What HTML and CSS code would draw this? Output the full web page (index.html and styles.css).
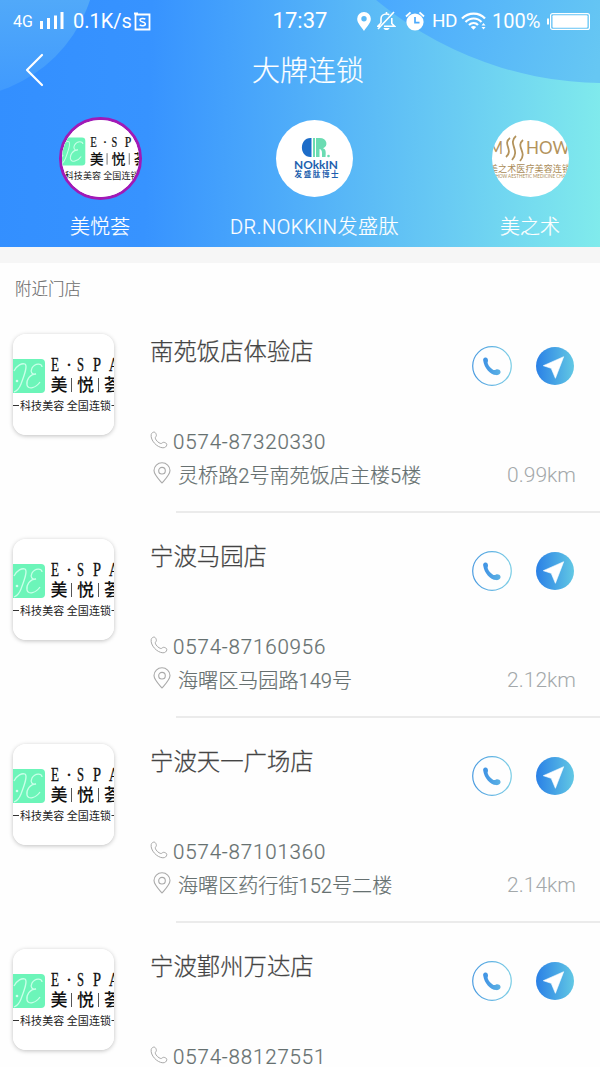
FILE: index.html
```html
<!DOCTYPE html>
<html lang="zh-CN">
<head>
    <meta charset="UTF-8">
    <meta name="viewport" content="width=device-width, initial-scale=1.0">
    <title>大牌连锁</title>
    <link rel="stylesheet" href="styles.css">
</head>
<body>
    <!-- 公用图形 -->
    <svg class="defs" width="0" height="0">
        <defs>
            <linearGradient id="blueGrad" x1="0" y1="0" x2="1" y2="0">
                <stop offset="0" stop-color="#2a80e6"/>
                <stop offset="1" stop-color="#62c8e4"/>
            </linearGradient>
            <linearGradient id="callGrad" x1="0" y1="0" x2="1" y2="0">
                <stop offset="0" stop-color="#3f92e4"/>
                <stop offset="1" stop-color="#5cb2e4"/>
            </linearGradient>
            <linearGradient id="ringGrad" x1="0" y1="0" x2="1" y2="0">
                <stop offset="0" stop-color="#4a9be0"/>
                <stop offset="1" stop-color="#7fcfe6"/>
            </linearGradient>
            <symbol id="espa" viewBox="0 0 101 101">
                <rect width="101" height="101" fill="#fff"/>
                <rect x="-6" y="25" width="38" height="34" rx="4" fill="#6cf5b9"/>
                <path d="M29 33c0-4-7-4-10 1-2 4 0 7 4 6-6 0-10 6-9 11 1 5 9 3 13-3M1 37c3-6 8-8 11-7 3 2-1 12-4 20-2 5-4 7-7 8" fill="none" stroke="#c9ffe8" stroke-width="1.300"/>
                <circle cx="4" cy="47" r="1.300" fill="#d5ffee"/>
                <g class="espa-en">
                    <text x="38" y="37" textLength="8" lengthAdjust="spacingAndGlyphs">E</text>
                    <text x="53" y="37">·</text>
                    <text x="64" y="37" textLength="7" lengthAdjust="spacingAndGlyphs">S</text>
                    <text x="80" y="37" textLength="8" lengthAdjust="spacingAndGlyphs">P</text>
                    <text x="96" y="37" textLength="10" lengthAdjust="spacingAndGlyphs">A</text>
                </g>
                <g class="espa-cn">
                    <text x="37.500" y="57">美</text>
                    <text x="64" y="57">悦</text>
                    <text x="91" y="57">荟</text>
                </g>
                <path d="M58.500 44v14M85.500 44v14" stroke="#555" stroke-width="1"/>
                <path d="M0 71.500h6M98.500 71.500h4" stroke="#333" stroke-width="1"/>
                <text class="espa-sub" x="7" y="75.500" textLength="91">科技美容 全国连锁</text>
            </symbol>
            <symbol id="call" viewBox="0 0 40 40">
                <circle cx="20" cy="20" r="19.300" fill="none" stroke="url(#ringGrad)" stroke-width="1.200"/>
                <path d="M11.200 14.500c-.5-2 1-3.500 2.800-3 1.500.4 2.200 2 2 3.500-.1.800-.6 1.500-.3 2.300.8 2.700 3 5.200 5.700 6.600.8.300 1.800-.2 2.700-.5 1.900-.5 4 .4 4.400 2.100.4 2.200-2 4-4.400 3.600C18 28.800 12.300 22 11.200 14.500z" fill="url(#callGrad)"/>
            </symbol>
            <symbol id="nav" viewBox="0 0 38 38">
                <circle cx="19" cy="19" r="19" fill="url(#blueGrad)"/>
                <path d="M27.700 9.700 7.300 18.700l7.900 2.600 4.200 10z" fill="#fff" stroke="#fff" stroke-width=".6" stroke-linejoin="round"/>
            </symbol>
            <symbol id="phone" viewBox="0 0 18 18">
                <path d="M1.200 3.500C1.600 2 3 .9 4.300 1.100c1.300.3 2 2.100 2.100 3.200.1 1.300-1.400 1.700-1.100 2.900.5 2.200 3.200 4.800 5.500 5.300 1.200.2 1.500-1.300 2.900-1.200 1.400.1 3.200 1 3.100 2.400-.1 1.800-1.800 3.200-3.900 3.100C7 16.500.2 9.300 1.200 3.500z" fill="none" stroke="#a9a9a9" stroke-width="1"/>
            </symbol>
            <symbol id="pin" viewBox="0 0 18 22">
                <path d="M9 21C5.500 17 1 12.500 1 8.500a8 7.700 0 0 1 16 0C17 12.500 12.500 17 9 21z" fill="none" stroke="#a9a9a9" stroke-width="1.100"/>
                <circle cx="9" cy="8.700" r="3.300" fill="none" stroke="#a9a9a9" stroke-width="1.100"/>
            </symbol>
        </defs>
    </svg>

    <header class="header">
        <svg class="header-bg" viewBox="0 0 600 247">
            <defs>
                <linearGradient id="leftCircle" x1="0" y1="0" x2="0" y2="98" gradientUnits="userSpaceOnUse">
                    <stop offset="0" stop-color="#51a9f9"/>
                    <stop offset="1" stop-color="#3f99fe"/>
                </linearGradient>
                <linearGradient id="rightCircle" x1="380" y1="0" x2="600" y2="60" gradientUnits="userSpaceOnUse">
                    <stop offset="0" stop-color="#4aa9fe"/>
                    <stop offset="1" stop-color="#66c7f3"/>
                </linearGradient>
            </defs>
            <circle cx="-45" cy="-44" r="142" fill="url(#leftCircle)"/>
            <circle cx="605" cy="-274" r="357" fill="url(#rightCircle)"/>
        </svg>

        <!-- 状态栏 -->
        <div class="status">
            <div class="status-left">
                <span class="net">4G</span>
                <svg width="24" height="18" viewBox="0 0 24 18" fill="#fff">
                    <path d="M0 9h3v8H0zM7 6h3v11H7zM14 3.500h3V17h-3zM20.500 0h3v17h-3z"/>
                </svg>
                <span class="speed">0.1K/s</span>
                <svg width="17" height="19" viewBox="0 0 17 19">
                    <path d="M1.500 2.500h14v15h-14zM0 1.500h4" fill="none" stroke="#fff" stroke-width="1.800"/>
                    <path d="M11.300 7.200c-1-1-5.300-1.200-5.300.9 0 2.500 5.400 1.400 5.400 4 0 2-4.200 2.100-5.700.8" fill="none" stroke="#fff" stroke-width="1.500"/>
                </svg>
            </div>
            <span class="clock">17:37</span>
            <div class="status-right">
                <svg width="14" height="19" viewBox="0 0 14 19">
                    <path d="M7 0a6.800 6.800 0 0 0-6.800 7C.2 11 4 14.500 7 19c3-4.500 6.800-8 6.800-12A6.800 6.800 0 0 0 7 0zm0 4a2.700 2.700 0 1 1 0 5.400A2.700 2.700 0 0 1 7 4z" fill="#fff"/>
                </svg>
                <svg class="bell" width="19" height="20" viewBox="0 0 19 20" fill="none" stroke="#fff" stroke-width="1.600">
                    <path d="M1 18 17 1M4 12V8c0-3 2.300-5 5.500-5 1 0 2 .2 2.800.7M14.800 7v5.500l2.700 2.700H7M4 12l-3 3.200h2M9.500 3V1"/>
                    <path d="M6.500 17h6c-.6 2.800-5.400 2.800-6 0z" fill="#fff" stroke="none"/>
                </svg>
                <svg class="alarm" width="20" height="20" viewBox="0 0 20 20">
                    <circle cx="10" cy="11" r="8.600" fill="#fff"/>
                    <path d="M1 5.500 5.500 1.300M19 5.500l-4.500-4.200" stroke="#fff" stroke-width="1.800"/>
                    <path d="M10 6v5.700h4.500" fill="none" stroke="#4ba9fc" stroke-width="1.700"/>
                </svg>
                <span class="hd">HD</span>
                <svg class="wifi" width="26" height="18" viewBox="0 0 26 18" fill="none" stroke="#fff" stroke-width="2.200">
                    <path d="M1 6.500c6.500-6.600 17-6.600 23 0M4.500 10c4.600-4.700 11.800-4.700 16 0M8 13c2.800-2.700 6.600-2.700 9 0"/>
                    <path d="M9.800 15c1.700-1.400 3.700-1.400 5.400 0l-2.700 2.800zM20.500 13.500l2-2.500 2 2.500zM20.500 15l2 2.500 2-2.500z" fill="#fff" stroke="none"/>
                </svg>
                <span class="percent">100%</span>
                <svg class="battery" width="43" height="17" viewBox="0 0 43 17">
                    <rect x="3.600" y=".6" width="38.800" height="15.800" rx="2" fill="none" stroke="#fff" stroke-width="1.200"/>
                    <rect x="5.500" y="2.300" width="35" height="12.400" rx="1" fill="#fff"/>
                    <path d="M0 5.500h2v6H0z" fill="#fff"/>
                </svg>
            </div>
        </div>

        <div class="title-bar">
            <svg class="back" width="19" height="34" viewBox="0 0 19 34">
                <path d="M17 2 2 17l15 15" fill="none" stroke="#fff" stroke-width="2.200" stroke-linecap="round" stroke-linejoin="round"/>
            </svg>
            <h1>大牌连锁</h1>
        </div>

        <!-- 品牌切换 -->
        <nav class="brands">
            <a class="brand active">
                <span class="brand-logo"><svg width="83" height="83" viewBox="0 0 83 83"><use href="#espa" x="0" y="0" width="83" height="83"/></svg></span>
                <span class="brand-name">美悦荟</span>
            </a>
            <a class="brand">
                <span class="brand-logo">
                    <svg width="77" height="77" viewBox="0 0 77 77">
                        <path d="M35.500 18v19h-1C23 37 23 18 34.500 18z" fill="#1c6cc8"/>
                        <path d="M37 18h2v19h-2zM40 18h3.500v19H40zM43.500 18c8 0 9 8.500 3.500 10.300 3 .7 3 4 2.500 8.700H46c.3-5 0-7.500-2.500-8z" fill="#6bdcb2"/>
                        <circle cx="52.500" cy="36" r="1.300" fill="#6bdcb2"/>
                        <text class="nokkin-en" x="18" y="48.500" textLength="44" lengthAdjust="spacingAndGlyphs">NOkkIN</text>
                        <text class="nokkin-cn" x="18.500" y="57" textLength="44">发盛肽博士</text>
                    </svg>
                </span>
                <span class="brand-name latin">DR.NOKKIN发盛肽</span>
            </a>
            <a class="brand">
                <span class="brand-logo">
                    <svg width="77" height="77" viewBox="0 0 77 77">
                        <text class="ms-en" x="-3" y="34" textLength="14" lengthAdjust="spacingAndGlyphs">M</text>
                        <path d="M18 18c-8 6 4 12-4 19M24 16c-9 8 5 14-4 24M31 20c-8 7 5 12-3 21" fill="none" stroke="#b3935c" stroke-width="1.800"/>
                        <text class="ms-en" x="34" y="34" textLength="44" lengthAdjust="spacingAndGlyphs">HOW</text>
                        <text class="ms-cn" x="-3" y="51.500" textLength="82">美之术医疗美容连锁</text>
                        <text class="ms-sub" x="1" y="58" textLength="74" lengthAdjust="spacingAndGlyphs">SHOW AESTHETIC MEDICINE CHAI</text>
                    </svg>
                </span>
                <span class="brand-name">美之术</span>
            </a>
        </nav>
    </header>

    <!-- 门店列表 -->
    <main class="stores">
        <h2>附近门店</h2>

        <section class="store">
            <svg class="store-logo"><use href="#espa"/></svg>
            <div class="info">
                <div class="info-top">
                    <h3>南苑饭店体验店</h3>
                    <svg class="call"><use href="#call"/></svg>
                    <svg class="nav"><use href="#nav"/></svg>
                </div>
                <div class="line tel"><svg class="i-phone"><use href="#phone"/></svg><span>0574-87320330</span></div>
                <div class="line addr"><svg class="i-pin"><use href="#pin"/></svg><span>灵桥路2号南苑饭店主楼5楼</span><em>0.99km</em></div>
                <div class="divider"></div>
            </div>
        </section>

        <section class="store">
            <svg class="store-logo"><use href="#espa"/></svg>
            <div class="info">
                <div class="info-top">
                    <h3>宁波马园店</h3>
                    <svg class="call"><use href="#call"/></svg>
                    <svg class="nav"><use href="#nav"/></svg>
                </div>
                <div class="line tel"><svg class="i-phone"><use href="#phone"/></svg><span>0574-87160956</span></div>
                <div class="line addr"><svg class="i-pin"><use href="#pin"/></svg><span>海曙区马园路149号</span><em>2.12km</em></div>
                <div class="divider"></div>
            </div>
        </section>

        <section class="store">
            <svg class="store-logo"><use href="#espa"/></svg>
            <div class="info">
                <div class="info-top">
                    <h3>宁波天一广场店</h3>
                    <svg class="call"><use href="#call"/></svg>
                    <svg class="nav"><use href="#nav"/></svg>
                </div>
                <div class="line tel"><svg class="i-phone"><use href="#phone"/></svg><span>0574-87101360</span></div>
                <div class="line addr"><svg class="i-pin"><use href="#pin"/></svg><span>海曙区药行街152号二楼</span><em>2.14km</em></div>
                <div class="divider"></div>
            </div>
        </section>

        <section class="store">
            <svg class="store-logo"><use href="#espa"/></svg>
            <div class="info">
                <div class="info-top">
                    <h3>宁波鄞州万达店</h3>
                    <svg class="call"><use href="#call"/></svg>
                    <svg class="nav"><use href="#nav"/></svg>
                </div>
                <div class="line tel"><svg class="i-phone"><use href="#phone"/></svg><span>0574-88127551</span></div>
            </div>
        </section>
    </main>
</body>
</html>
```
FILE: styles.css
```css
* {
    box-sizing: border-box;
    margin: 0;
    padding: 0;
}

body {
    width: 600px;
    height: 1067px;
    overflow: hidden;
    background: #fefefe;
    font-family: Roboto, "Noto Sans CJK SC", sans-serif;
    font-weight: 300;
    color: #555;
}

svg {
    display: block;
    flex-shrink: 0;
}

.defs {
    position: absolute;
}

/* 顶部 */
.header {
    position: relative;
    height: 247px;
    background: linear-gradient(92deg, #338fff 0%, #3793ff 25%, #50aef9 50%, #69cbf3 75%, #80ebec 100%);
    color: #fff;
    overflow: hidden;
}

.header-bg {
    position: absolute;
    top: 0;
    left: 0;
    width: 600px;
    height: 247px;
}

.status,
.title-bar,
.brands {
    position: relative;
}

.status {
    display: grid;
    grid-template-columns: 260px 80px 1fr;
    align-items: center;
    height: 40px;
    padding-right: 10px;
    font-weight: 400;
}

.status-left,
.status-right {
    display: flex;
    align-items: center;
}

.status-left {
    padding-left: 13px;
}

.status-right {
    justify-content: flex-end;
}

.net {
    width: 27px;
    font-size: 16px;
}

.speed {
    width: 61px;
    margin-left: 9px;
    font-size: 20px;
    white-space: nowrap;
}

.clock {
    font-size: 22px;
    line-height: 42px;
    text-align: center;
}

.bell {
    margin-left: 6px;
}

.alarm {
    margin-left: 9px;
}

.hd {
    width: 26px;
    margin-left: 7px;
    font-size: 19px;
    line-height: 42px;
    letter-spacing: -.5px;
}

.wifi {
    margin-left: 3px;
}

.percent {
    width: 51px;
    margin-left: 5px;
    font-size: 20px;
    line-height: 42px;
}

.battery {
    margin-left: 4px;
}

.title-bar {
    display: grid;
    grid-template-columns: 100px 1fr 84px;
    align-items: center;
    height: 60px;
}

.back {
    margin: -2px 0 0 25px;
}

.title-bar h1 {
    padding-top: 2px;
    font-size: 28px;
    font-weight: 300;
    line-height: 60px;
    text-align: center;
    -webkit-text-stroke: .2px;
}

.brands {
    display: grid;
    grid-template-columns: 200px 229px 202px;
    width: 631px;
    padding-top: 17px;
}

.brand {
    display: flex;
    flex-direction: column;
    align-items: center;
}

.brand-logo {
    display: flex;
    align-items: center;
    justify-content: center;
    width: 77px;
    height: 77px;
    margin: 3px;
    border-radius: 50%;
    background: #fff;
    overflow: hidden;
}

.active .brand-logo {
    width: 83px;
    height: 83px;
    margin: 0;
    border: 3px solid #a119b6;
}

.brand-name {
    margin-top: 12px;
    font-size: 20px;
    line-height: 30px;
    white-space: nowrap;
    -webkit-text-stroke: .2px;
}

.latin {
    letter-spacing: .5px;
}

/* logo 文字 */
.espa-en {
    font: 400 18px "Liberation Serif", serif;
    fill: #111;
    stroke: #111;
    stroke-width: .3;
}

.espa-cn {
    font: 500 17px "Noto Sans CJK SC", sans-serif;
    fill: #111;
}

.espa-sub {
    font: 400 11px "Noto Sans CJK SC", sans-serif;
    fill: #222;
}

.nokkin-en {
    font: 700 10.500px Lato, sans-serif;
    fill: #1d5fae;
}

.nokkin-cn {
    font: 700 7.500px "Noto Sans CJK SC", sans-serif;
    fill: #1d5fae;
}

.ms-en {
    font: 400 18px Lato, sans-serif;
    fill: #b3935c;
}

.ms-cn {
    font: 400 9px "Noto Sans CJK SC", sans-serif;
    fill: #a98a55;
}

.ms-sub {
    font: 400 5px Lato, sans-serif;
    fill: #a98a55;
}

/* 门店 */
.stores {
    height: 820px;
    border-top: 16px solid #f6f6f6;
    overflow: hidden;
}

.stores h2 {
    height: 44px;
    padding-left: 15px;
    font-size: 16.500px;
    font-weight: 300;
    line-height: 53px;
    color: #6c6c6c;
    -webkit-text-stroke: .1px;
}

.store {
    display: flex;
    height: 205px;
    padding: 27px 24px 0 13px;
}

.store-logo {
    width: 101px;
    height: 101px;
    border-radius: 13px;
    box-shadow: 0 1px 4px rgba(0, 0, 0, .25);
}

.info {
    flex: 1;
    margin-left: 36px;
}

.info-top {
    display: flex;
    height: 91px;
    padding-right: 2px;
}

.info-top h3 {
    flex: 1;
    font-size: 23.400px;
    font-weight: 300;
    line-height: 36px;
    color: #444;
    -webkit-text-stroke: .25px;
}

.call {
    width: 40px;
    height: 40px;
    margin-top: 12px;
}

.nav {
    width: 38px;
    height: 38px;
    margin: 13px 0 0 24px;
}

.line {
    display: flex;
    align-items: center;
    height: 33px;
    color: #667070;
    -webkit-text-stroke: .2px;
}

.i-phone {
    width: 18px;
    height: 18px;
    margin-top: -4px;
}

.tel span {
    margin-left: 5px;
    font-size: 20.500px;
    letter-spacing: .84px;
}

.i-pin {
    width: 18px;
    height: 22px;
    margin: -4px 7px 0 3px;
}

.addr span {
    flex: 1;
    font-size: 20.100px;
}

.addr em {
    font-size: 21px;
    font-style: normal;
    color: #a3a8aa;
    -webkit-text-stroke: 0;
}

.divider {
    height: 2px;
    margin: 20px -24px 0 26px;
    background: #ebebeb;
}
```
